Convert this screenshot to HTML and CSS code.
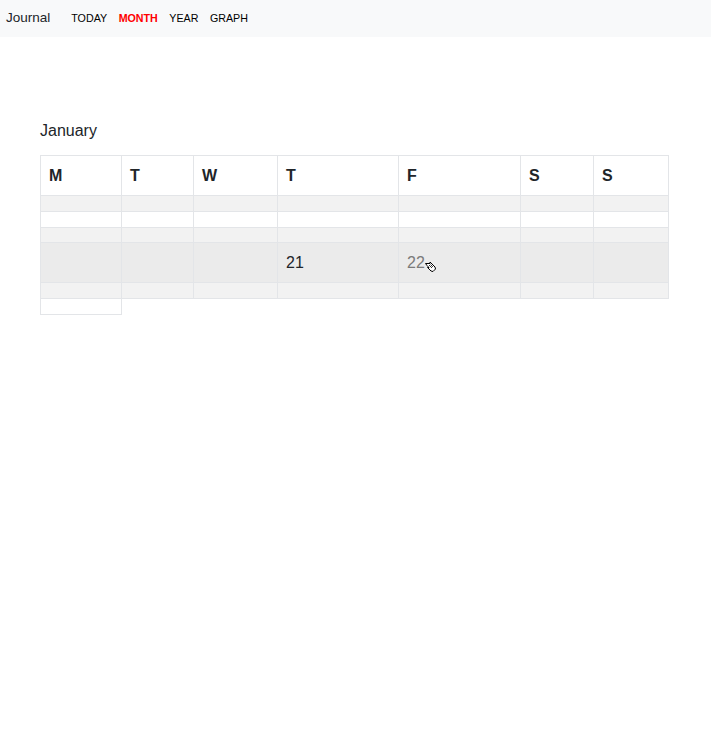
FILE: index.html
```html
<!DOCTYPE html>
<html>
<head>
<meta charset="utf-8">
<link rel="stylesheet" href="styles.css">
</head>
<body>
<nav class="navbar">
  <span class="brand">Journal</span>
  <ul class="nav">
    <li><a href="#">TODAY</a></li>
    <li><a href="#" class="active">MONTH</a></li>
    <li><a href="#">YEAR</a></li>
    <li><a href="#">GRAPH</a></li>
  </ul>
</nav>
<main class="content">
  <h2 class="month">January</h2>
  <table class="cal">
    <colgroup>
      <col class="c1"><col class="c2"><col class="c3"><col class="c4"><col class="c5"><col class="c6"><col class="c7">
    </colgroup>
    <thead>
      <tr class="head"><th>M</th><th>T</th><th>W</th><th>T</th><th>F</th><th>S</th><th>S</th></tr>
    </thead>
    <tbody>
      <tr class="empty odd"><td></td><td></td><td></td><td></td><td></td><td></td><td></td></tr>
      <tr class="empty"><td></td><td></td><td></td><td></td><td></td><td></td><td></td></tr>
      <tr class="empty odd short"><td></td><td></td><td></td><td></td><td></td><td></td><td></td></tr>
      <tr class="week hover"><td></td><td></td><td></td><td>21</td><td class="future"><span class="cursor-wrap">22<svg class="cursor" width="13" height="13" viewBox="0 0 13 13"><path d="M1.5 3.5 L6 3.5 L6 2 L8 4 L11 7 L11.5 9 L9 11.5 L7 11 L3.5 7.5 L5 7.5 L3 5.5 L1.5 3.5 Z" fill="#fff" stroke="#000" stroke-width="1" stroke-linejoin="round"/><path d="M5 5 L8 8 M6.5 4.5 L9 7" stroke="#000" stroke-width="0.8" fill="none"/></svg></span></td><td></td><td></td></tr>
      <tr class="empty odd"><td></td><td></td><td></td><td></td><td></td><td></td><td></td></tr>
      <tr class="empty last"><td></td></tr>
    </tbody>
  </table>
</main>
</body>
</html>
```
FILE: styles.css
```css
* { box-sizing: border-box; }
html, body { margin: 0; padding: 0; }
body {
  font-family: "Liberation Sans", Arial, sans-serif;
  color: #212529;
  background: #fff;
  width: 711px;
}
.navbar {
  background: #f8f9fa;
  height: 37px;
  display: flex;
  align-items: center;
  padding: 0 5px 3px 6px;
}
.brand {
  font-size: 13.5px;
  color: #212529;
  margin-right: 21px;
}
.nav {
  list-style: none;
  margin: 0;
  padding: 0;
  display: flex;
  gap: 11.5px;
}
.nav a {
  font-size: 10.7px;
  color: #000;
  text-decoration: none;
}
.nav a.active { color: #ff0000; font-weight: bold; }
.content {
  padding: 84px 43px 0 40px;
}
.month {
  font-size: 16px;
  font-weight: normal;
  margin: 0 0 15px 0;
  line-height: 19px;
}
.cal {
  border-collapse: collapse;
  table-layout: fixed;
  width: 628px;
}
.c1 { width: 81px; }
.c2 { width: 72px; }
.c3 { width: 84px; }
.c4 { width: 121px; }
.c5 { width: 122px; }
.c6 { width: 73px; }
.c7 { width: 75px; }
.cal th, .cal td {
  border: 1px solid #e3e5e8;
  padding: 0 8px;
  text-align: left;
}
.cal th {
  font-size: 16px;
  font-weight: bold;
  height: 40px;
}
.cal .empty td { height: 16px; }
.cal .empty.short td { height: 15px; }
.cal .odd td { background: #f2f2f2; }
.cal .week td {
  height: 40px;
  background: #ebebeb;
  font-size: 16px;
}
.cal .future { color: #7a7a7a; }
.cursor-wrap { position: relative; }
.cursor {
  position: absolute;
  left: 17px;
  top: 6px;
}
```
